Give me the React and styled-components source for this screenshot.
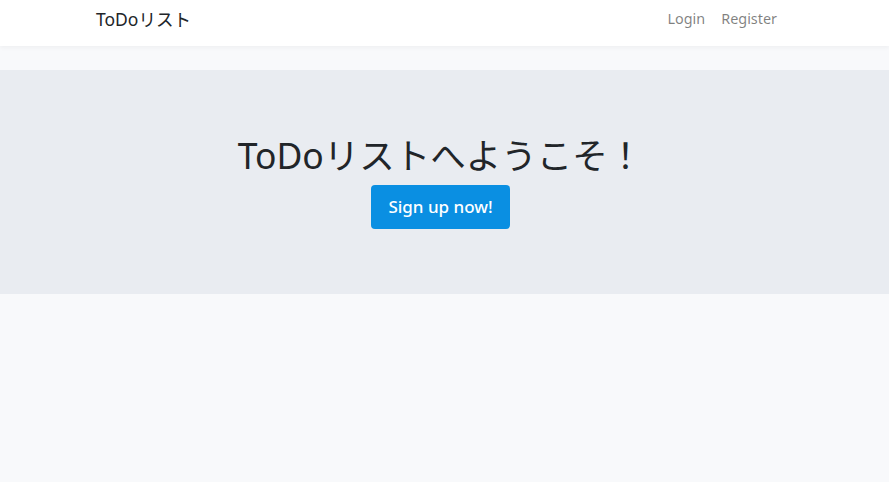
import styled, { createGlobalStyle } from 'styled-components'

const Global = createGlobalStyle`
  html, body {
    margin: 0;
    padding: 0;
    background: #f8f9fb;
    font-family: 'Noto Sans', 'Noto Sans CJK JP', sans-serif;
  }
`

export default () => {
  return (
    <S.Page>
      <Global />
      <S.Navbar>
        <S.Brand>ToDoリスト</S.Brand>
        <S.Links>
          <S.NavLink>Login</S.NavLink>
          <S.NavLink>Register</S.NavLink>
        </S.Links>
      </S.Navbar>
      <S.Main>
        <S.Jumbotron>
          <S.Title>ToDoリストへようこそ！</S.Title>
          <S.Button>Sign up now!</S.Button>
        </S.Jumbotron>
      </S.Main>
    </S.Page>
  )
}

const S = {
  Page: styled.div`
    min-height: 482px;
    background: #f8f9fb;
  `,
  Navbar: styled.nav`
    height: 46px;
    background: #fff;
    box-shadow: 0 2px 4px rgba(0, 0, 0, 0.04);
    display: flex;
    align-items: center;
    justify-content: space-between;
    padding: 0 104px 0 96px;
    position: relative;
  `,
  Brand: styled.div`
    font-size: 17.5px;
    color: #212529;
    margin-top: -10px;
  `,
  Links: styled.div`
    display: flex;
    margin-top: -10px;
    margin-left: 4px;
  `,
  NavLink: styled.a`
    font-size: 14.4px;
    color: rgba(0, 0, 0, 0.5);
    padding: 0 8px;
  `,
  Main: styled.main`
    padding-top: 24px;
  `,
  Jumbotron: styled.section`
    background: #e9ecf1;
    height: 224px;
    box-sizing: border-box;
    padding: 64px 104px 0 96px;
    display: flex;
    flex-direction: column;
    align-items: center;
  `,
  Title: styled.h1`
    margin: 0 0 8px;
    font-size: 35.5px;
    font-weight: 400;
    line-height: 1.2;
    color: #212529;
  `,
  Button: styled.button`
    width: 139px;
    height: 44px;
    border: none;
    border-radius: 4px;
    background: #0a8fe2;
    color: #fff;
    font-family: 'Noto Sans', sans-serif;
    font-size: 17px;
    font-weight: 550;
  `,
}
